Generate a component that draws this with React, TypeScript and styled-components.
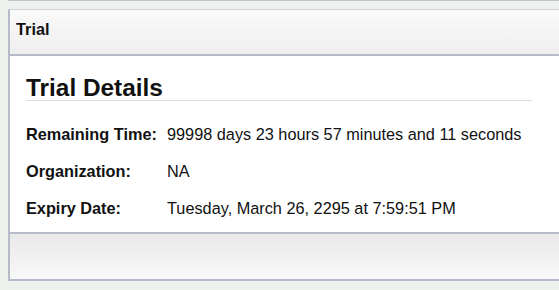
import React from 'react';
import styled, { createGlobalStyle } from 'styled-components';

const GlobalStyle = createGlobalStyle`
  html, body {
    margin: 0;
    padding: 0;
    background: #eef2ee;
    overflow: hidden;
    font-family: "Liberation Sans", Arial, sans-serif;
    color: #111;
  }
`;

const Page = styled.div`
  padding-left: 8px;
  height: 290px;
`;

const PrevEdge = styled.div`
  height: 0;
  border-bottom: 1px solid #c3c7cc;
  margin-bottom: 8px;
`;

const Panel = styled.section`
  border-left: 2px solid #b6bac9;
  border-top: 1px solid #d0d3da;
  border-bottom: 2px solid #b6bac9;
  background: #fff;
`;

const PanelHeader = styled.header`
  height: 46px;
  box-sizing: border-box;
  padding: 11px 6px 0;
  background: linear-gradient(#fafafa, #eeeeee);
  border-bottom: 2px solid #b6bac9;
  font-size: 16.3px;
  line-height: 17px;
  font-weight: bold;
`;

const PanelBody = styled.div`
  padding: 20px 16px 6px;
`;

const Heading = styled.h1`
  margin: 0;
  width: 506px;
  font-size: 24.4px;
  line-height: 24px;
  font-weight: bold;
  border-bottom: 1px solid #dcdcdc;
`;

const Details = styled.dl`
  margin: 14px 0 0;
  display: grid;
  grid-template-columns: 141px 1fr;
  grid-auto-rows: 37px;
  align-items: center;
  font-size: 16.3px;
  line-height: 18px;
`;

const Label = styled.dt`
  font-weight: bold;
`;

const Value = styled.dd`
  margin: 0;
`;

const PanelFooter = styled.footer`
  height: 45px;
  border-top: 2px solid #b6bac9;
  background: linear-gradient(#e9e9e9, #f8f8f8);
`;

const rows: [string, string][] = [
  ['Remaining Time:', '99998 days 23 hours 57 minutes and 11 seconds'],
  ['Organization:', 'NA'],
  ['Expiry Date:', 'Tuesday, March 26, 2295 at 7:59:51 PM'],
];

export default function App() {
  return (
    <Page>
      <GlobalStyle />
      <PrevEdge />
      <Panel>
        <PanelHeader>Trial</PanelHeader>
        <PanelBody>
          <Heading>Trial Details</Heading>
          <Details>
            {rows.map(([label, value]) => (
              <React.Fragment key={label}>
                <Label>{label}</Label>
                <Value>{value}</Value>
              </React.Fragment>
            ))}
          </Details>
        </PanelBody>
        <PanelFooter />
      </Panel>
    </Page>
  );
}
